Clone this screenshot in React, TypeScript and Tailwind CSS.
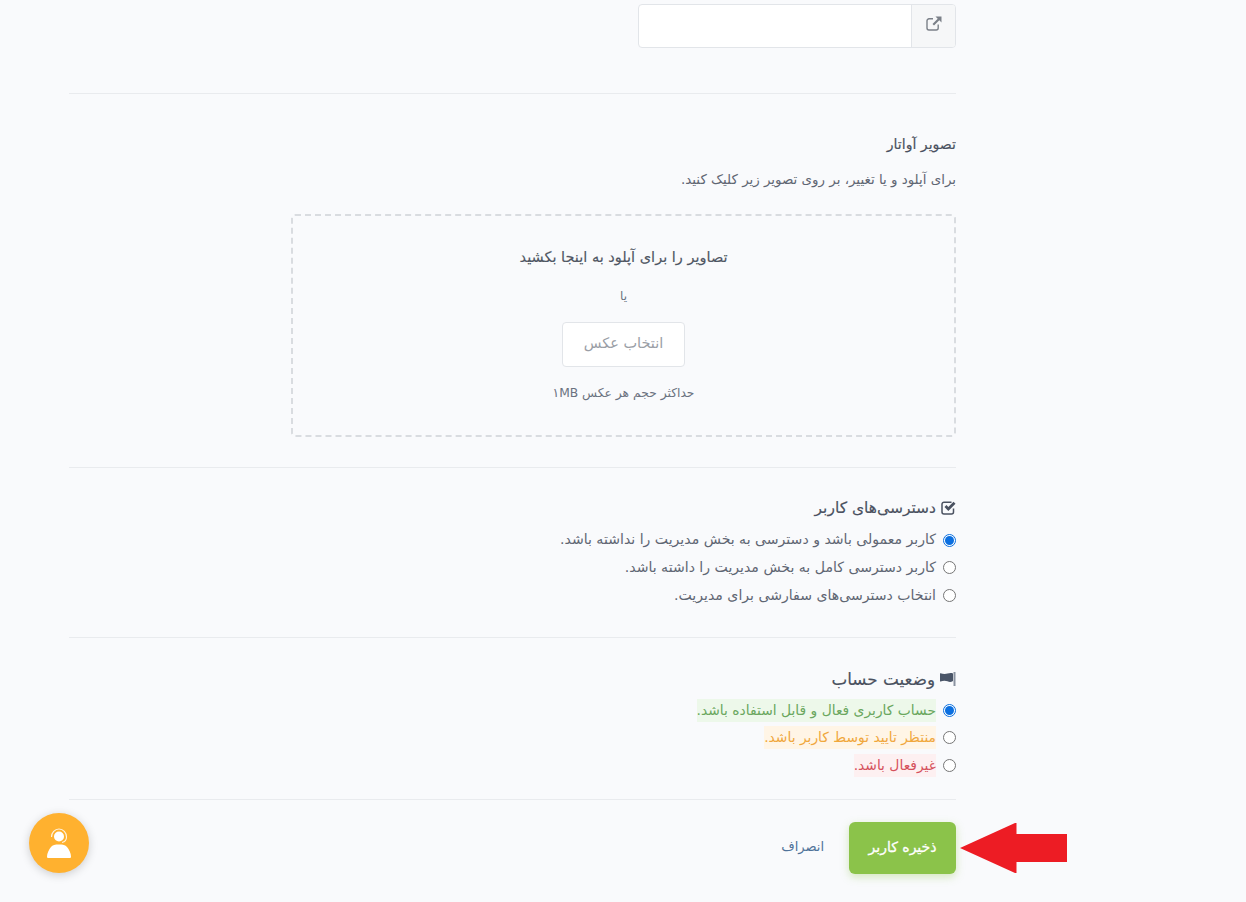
const accessOptions = [
  { label: 'کاربر معمولی باشد و دسترسی به بخش مدیریت را نداشته باشد.', checked: true },
  { label: 'کاربر دسترسی کامل به بخش مدیریت را داشته باشد.', checked: false },
  { label: 'انتخاب دسترسی‌های سفارشی برای مدیریت.', checked: false },
];

const statusOptions = [
  { label: 'حساب کاربری فعال و قابل استفاده باشد.', checked: true, tone: 'bg-[#edf8ea] text-[#6aa75e]' },
  { label: 'منتظر تایید توسط کاربر باشد.', checked: false, tone: 'bg-[#fff5e6] text-[#f0a73c]' },
  { label: 'غیرفعال باشد.', checked: false, tone: 'bg-[#fdf0f1] text-[#d5505c]' },
];

function Radio({ checked }: { checked: boolean }) {
  return (
    <span
      className={
        checked
          ? 'flex h-[13px] w-[13px] shrink-0 items-center justify-center rounded-full border border-[#0b6fe0] bg-white'
          : 'h-[13px] w-[13px] shrink-0 rounded-full border border-[#767676] bg-white'
      }
    >
      {checked && <span className="h-[9px] w-[9px] rounded-full bg-[#0b6fe0]" />}
    </span>
  );
}

function LinkIcon() {
  return (
    <svg width="16" height="15" viewBox="0 0 16 15" fill="none">
      <path d="M7 2.800H3a2 2 0 0 0-2 2V12a2 2 0 0 0 2 2h7.200a2 2 0 0 0 2-2V8.500" stroke="#7b8088" strokeWidth="1.400" />
      <path d="M9.500 .5H15.500V6.500L13.300 4.300 8 9.500 6.500 8 11.700 2.700z" fill="#7b8088" />
    </svg>
  );
}

function CheckIcon() {
  return (
    <svg width="15" height="14" viewBox="0 0 15 14" fill="none" className="shrink-0">
      <path d="M10.500 1.200H3A2 2 0 0 0 1 3.200V11a2 2 0 0 0 2 2h7.500a2 2 0 0 0 2-2V7.500" stroke="#4a5160" strokeWidth="1.500" />
      <path d="M3.500 6 5.500 4 7.300 5.900 12.500 .8 14.500 2.800 7.300 10z" fill="#4a5160" />
    </svg>
  );
}

function FlagIcon() {
  return (
    <svg width="16" height="14" viewBox="0 0 16 14" className="shrink-0">
      <rect x="13.500" y="0" width="2" height="14" fill="#8a92a0" />
      <path d="M13 1.500C11 .6 9.500 1 7.500 1.600 5.500 2.200 3 2.200 .5 1.200 0 1.200 0 1.500 0 2v7c0 .5.200.7.600.5 2.400-1 4.900-1 6.900-.2 2 .8 3.500.9 5.500-.3z" fill="#4a5568" />
    </svg>
  );
}

function AgentIcon() {
  return (
    <svg width="36" height="36" viewBox="0 0 36 36" fill="none">
      <circle cx="18" cy="11.500" r="5" fill="#fff" />
      <path d="M10.500 12c0-4.500 3.300-8 7.500-8s7.500 3.500 7.500 8" stroke="#fff" strokeWidth="1.200" opacity="0.85" />
      <path d="M25.500 12c0 3-2 5-4.500 5.500" stroke="#fff" strokeWidth="1.100" opacity="0.85" />
      <path d="M18 19.500c-4 0-6.500.6-8 2.500-2 2.500-4 6-4 9.500 0 1 .5 1.500 1.500 1.500h21c1 0 1.500-.5 1.500-1.500 0-3.500-2-7-4-9.500-1.500-1.900-4-2.500-8-2.500z" fill="#fff" />
    </svg>
  );
}

export default function App() {
  return (
    <div
      dir="rtl"
      className="relative h-[902px] overflow-hidden bg-[#f9fafc] pt-[4px] pl-[69px] pr-[290px] text-[#5b6270]"
      style={{ fontFamily: '"DejaVu Sans", sans-serif' }}
    >
      {/* آدرس */}
      <div className="flex h-[44px] w-[318px] overflow-hidden rounded-[4px] border border-[#e2e5e9] bg-white">
        <div className="flex w-[44px] shrink-0 items-center justify-center border-l border-[#e2e5e9] bg-[#f6f7f8] pb-[5px]">
          <LinkIcon />
        </div>
      </div>

      <hr className="mt-[45px] border-[#e9ebee]" />

      {/* تصویر آواتار */}
      <h3 className="mt-[40px] text-[14.100px] leading-[20px] text-[#4a5160] [-webkit-text-stroke:0.15px]">تصویر آواتار</h3>
      <p className="mt-[16px] text-[13.400px] leading-[20px] text-[#5f6673]">
        برای آپلود و یا تغییر، بر روی تصویر زیر کلیک کنید.
      </p>

      <div className="mt-[24px] flex h-[223px] w-[665px] flex-col items-center rounded-[4px] border-2 border-dashed border-[#d9dce0] pt-[31px]">
        <div className="text-[14.500px] leading-[20px] text-[#4f5663] [-webkit-text-stroke:0.15px]">تصاویر را برای آپلود به اینجا بکشید</div>
        <div className="mt-[19px] text-[12px] leading-[20px] text-[#6b7280]">یا</div>
        <button className="mt-[16px] h-[45px] w-[123px] rounded-[4px] border border-[#e2e5e9] bg-white pb-[2px] text-[14.500px] text-[#9a9ea6]">
          انتخاب عکس
        </button>
        <div className="mt-[16px] text-[12.300px] leading-[20px] text-[#6b7280]">حداکثر حجم هر عکس ۱MB</div>
      </div>

      <hr className="mt-[30px] border-[#e9ebee]" />

      {/* دسترسی‌های کاربر */}
      <h3 className="mt-[29px] flex items-center gap-[5px] text-[15.500px] leading-[22px] text-[#4a5160] [-webkit-text-stroke:0.15px]">
        <CheckIcon />
        دسترسی‌های کاربر
      </h3>
      <div className="mt-[11px] flex flex-col gap-[7px]">
        {accessOptions.map((o) => (
          <label key={o.label} className="flex h-[21px] items-center gap-[7px] text-[14.080px] text-[#5f6673] first:h-[20px]">
            <Radio checked={o.checked} />
            {o.label}
          </label>
        ))}
      </div>

      <hr className="mt-[31px] border-[#e9ebee]" />

      {/* وضعیت حساب */}
      <h3 className="mt-[30px] flex items-center gap-[5px] text-[16.800px] leading-[22px] text-[#4a5160] [-webkit-text-stroke:0.15px]">
        <FlagIcon />
        وضعیت حساب
      </h3>
      <div className="mt-[10px] flex flex-col gap-[7px]">
        {statusOptions.map((o) => (
          <label key={o.label} className="flex h-[21px] items-center gap-[7px] text-[13.850px] first:h-[20px]">
            <Radio checked={o.checked} />
            <span className={`leading-[23px] ${o.tone}`}>{o.label}</span>
          </label>
        ))}
      </div>

      <hr className="mt-[23px] border-[#e9ebee]" />

      {/* دکمه‌ها */}
      <div className="mt-[22px] flex items-center gap-[25px]">
        <button className="h-[52px] w-[107px] rounded-[6px] bg-[#8bc34a] pb-[2px] text-[14px] text-white shadow-[0_3px_8px_rgba(139,195,74,0.35)] [-webkit-text-stroke:0.3px]">
          ذخیره کاربر
        </button>
        <a className="pb-[2px] text-[13px] text-[#4f7299]">انصراف</a>
      </div>

      {/* فلش قرمز */}
      <svg width="110" height="52" viewBox="0 0 110 52" className="absolute top-[822px] left-[959px]">
        <path d="M1 26 56 1h1.500v11H108v28H57.500v11H56z" fill="#ed1c24" />
      </svg>

      {/* دکمه پشتیبانی */}
      <div className="absolute top-[813px] left-[29px] flex h-[60px] w-[60px] items-center justify-center rounded-full bg-[#ffb12f] shadow-[0_2px_10px_rgba(0,0,0,0.18)]">
        <AgentIcon />
      </div>
    </div>
  );
}
